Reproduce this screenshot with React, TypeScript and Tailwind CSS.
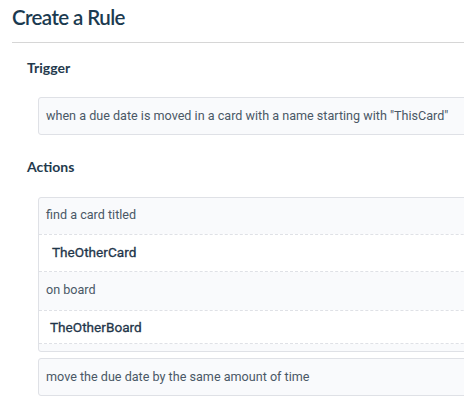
import React from "react";

export default function App() {
  return (
    <div className="w-[464px] h-[404px] overflow-hidden bg-white">
      <div className="w-[540px] pl-3">
        <h1 className="pt-[4px] text-[20.5px] leading-[27px] tracking-[-0.6px] text-[#1b3a50] font-['Lato',sans-serif] font-semibold">
          Create a Rule
        </h1>
        <div className="mt-[11px] h-px bg-[#d6d6d6]" />
        <div className="pl-[15px] font-['Roboto',sans-serif]">
          <h2 className="mt-[16px] text-[14px] leading-[17px] font-bold text-[#243a4d] font-['Lato',sans-serif]">
            Trigger
          </h2>
          <div className="mt-[21px] ml-[11px] rounded-[3px] border border-[#dfe1e6] bg-[#f9fafc] px-[7px] py-[10px] text-[12.6px] leading-[16px] text-[#4a5866]">
            when a due date is moved in a card with a name starting with "ThisCard"
          </div>
          <h2 className="mt-[23px] text-[14px] leading-[17px] font-bold text-[#243a4d] font-['Lato',sans-serif]">
            Actions
          </h2>
          <div className="mt-[22px] ml-[11px] rounded-[3px] border border-[#dfe1e6] bg-[#f9fafc] text-[12.6px] leading-[16px] text-[#4a5866]">
            <div className="h-[36px] px-[7px] pt-[9px]">find a card titled</div>
            <div className="h-[38px] border-t border-b border-dashed border-[#dfe1e6] bg-white pl-[13px] pt-[9px] text-[13.6px] font-normal text-[#1f364a] [-webkit-text-stroke:0.3px_#1f364a]">
              TheOtherCard
            </div>
            <div className="h-[38px] px-[7px] pt-[10px]">on board</div>
            <div className="h-[34px] border-t border-b border-dashed border-[#dfe1e6] bg-white pl-[11px] pt-[8px] text-[13.6px] font-normal text-[#1f364a] [-webkit-text-stroke:0.3px_#1f364a]">
              TheOtherBoard
            </div>
            <div className="h-[7px]" />
          </div>
          <div className="mt-[6px] ml-[11px] rounded-[3px] border border-[#dfe1e6] bg-[#f9fafc] px-[7px] py-[10px] text-[12.6px] leading-[16px] text-[#4a5866]">
            move the due date by the same amount of time
          </div>
        </div>
      </div>
    </div>
  );
}
